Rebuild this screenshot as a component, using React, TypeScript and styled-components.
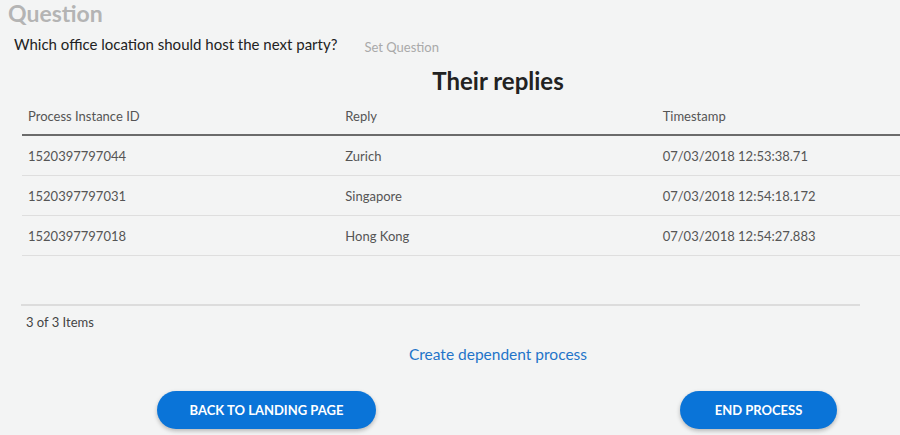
import React from "react";
import styled, {createGlobalStyle} from "styled-components";

const GlobalStyle = createGlobalStyle`
    body {
        margin: 0;
        background: #f3f4f4;
        font-family: "Lato", "Liberation Sans", sans-serif;
        overflow: hidden;
    }
`;

const Page = styled.div`
    width: 900px;
    height: 435px;
    overflow: hidden;
    position: relative;
`;

const Title = styled.h1`
    margin: 0 0 0 8px;
    font-size: 23px;
    line-height: 26px;
    font-weight: 700;
    color: #b4b4b4;
`;

const QuestionRow = styled.div`
    display: flex;
    align-items: baseline;
    padding: 9px 0 0 14px;
`;

const QuestionText = styled.span`
    font-size: 15px;
    color: #222;
`;

const SetLink = styled.span`
    margin-left: 27px;
    font-size: 13px;
    color: #a9a9a9;
    position: relative;
    top: 2px;
`;

const Content = styled.div`
    width: 952px;
    margin-left: 22px;
`;

const Heading = styled.h2`
    margin: 14px 0 0;
    text-align: center;
    font-size: 24px;
    line-height: 28px;
    font-weight: 700;
    color: #222;
`;

const Table = styled.table`
    width: 100%;
    border-collapse: collapse;
    table-layout: fixed;
    margin-top: 3px;
`;

const HeadCell = styled.th`
    text-align: left;
    font-weight: 400;
    font-size: 13px;
    color: #555;
    height: 36px;
    padding: 0 6px;
    border-bottom: 2px solid #6b6b6b;
`;

const Cell = styled.td`
    font-size: 13px;
    color: #555;
    height: 39px;
    padding: 0 6px;
    border-bottom: 1px solid #dedede;
`;

const Pager = styled.div`
    box-sizing: border-box;
    width: 839px;
    margin: 48px 0 0 -1px;
    border-top: 2px solid #dcdcdc;
    padding: 8px 0 0 5px;
    font-size: 13px;
    color: #444;
`;

const CreateLink = styled.a`
    display: block;
    margin-top: 15px;
    text-align: center;
    font-size: 15.5px;
    color: #1f74c9;
    cursor: pointer;
`;

const ButtonRow = styled.div`
    display: flex;
    justify-content: space-between;
    padding: 0 137px 0 135px;
    margin-top: 28px;
`;

const PillButton = styled.button<{ $width: number }>`
    width: ${p => p.$width}px;
    height: 38px;
    border: none;
    border-radius: 19px;
    background: #0a74d8;
    color: #fff;
    font-family: inherit;
    font-size: 13px;
    font-weight: 700;
    box-shadow: 0 2px 4px rgba(0, 0, 0, 0.25);
    cursor: pointer;
`;

const rows = [
    {id: "1520397797044", reply: "Zurich", time: "07/03/2018 12:53:38.71"},
    {id: "1520397797031", reply: "Singapore", time: "07/03/2018 12:54:18.172"},
    {id: "1520397797018", reply: "Hong Kong", time: "07/03/2018 12:54:27.883"},
];

const App = () => {
    return (
        <Page>
            <GlobalStyle/>
            <Title>Question</Title>
            <QuestionRow>
                <QuestionText>Which office location should host the next party?</QuestionText>
                <SetLink>Set Question</SetLink>
            </QuestionRow>
            <Content>
                <Heading>Their replies</Heading>
                <Table>
                    <thead>
                    <tr>
                        <HeadCell>Process Instance ID</HeadCell>
                        <HeadCell>Reply</HeadCell>
                        <HeadCell>Timestamp</HeadCell>
                    </tr>
                    </thead>
                    <tbody>
                    {rows.map(r => (
                        <tr key={r.id}>
                            <Cell>{r.id}</Cell>
                            <Cell>{r.reply}</Cell>
                            <Cell>{r.time}</Cell>
                        </tr>
                    ))}
                    </tbody>
                </Table>
                <Pager>3 of 3 Items</Pager>
                <CreateLink>Create dependent process</CreateLink>
                <ButtonRow>
                    <PillButton $width={219}>BACK TO LANDING PAGE</PillButton>
                    <PillButton $width={157}>END PROCESS</PillButton>
                </ButtonRow>
            </Content>
        </Page>
    );
};

export default App;
